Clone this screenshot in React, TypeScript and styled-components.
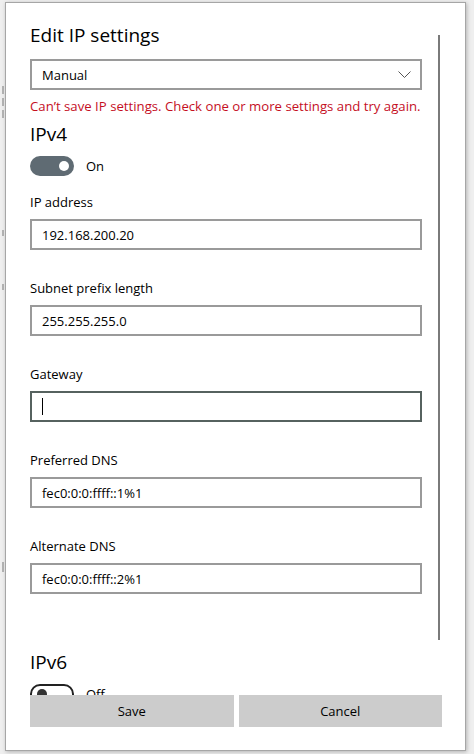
import React from 'react';
import styled, { createGlobalStyle } from 'styled-components';

const GlobalStyle = createGlobalStyle`
  html, body {
    margin: 0;
    padding: 0;
  }
  body {
    font-family: 'Open Sans', 'Noto Sans', sans-serif;
    color: #000;
    background: #efefef;
  }
`;

const Page = styled.div`
  display: flex;
  width: 474px;
  height: 754px;
  overflow: hidden;
  background: #efefef;
`;

const Backdrop = styled.div`
  width: 5px;
  flex: none;
  display: flex;
  flex-direction: column;
  align-items: flex-end;
  padding-top: 86px;
`;

const BackdropMark = styled.div<{ $gap?: number; $h?: number }>`
  width: 2px;
  height: ${(p) => p.$h ?? 8}px;
  margin-top: ${(p) => p.$gap ?? 4}px;
  margin-right: 1px;
  background: #b4b4b4;
`;

const Dialog = styled.div`
  box-sizing: border-box;
  width: 461px;
  margin: 2px 0 3px 0;
  border: 1px solid #a6a6a6;
  box-shadow: 1px 1px 4px rgba(0, 0, 0, 0.25);
  background: #fff;
  display: flex;
  flex-direction: column;
`;

const Body = styled.div`
  flex: 1;
  min-height: 0;
  display: flex;
  overflow: hidden;
`;

const Content = styled.div`
  flex: none;
  width: 392px;
  padding: 18px 0 0 24px;
`;

const ScrollTrack = styled.div`
  margin-left: 16px;
  padding-top: 32px;
`;

const ScrollThumb = styled.div`
  width: 2px;
  height: 605px;
  background: #7a7a7a;
`;

const Title = styled.div`
  font-size: 19px;
  line-height: 28px;
`;

const Heading = styled.div<{ $gap: number }>`
  font-size: 19px;
  line-height: 28px;
  margin-top: ${(p) => p.$gap}px;
`;

const Select = styled.div`
  box-sizing: border-box;
  height: 31px;
  margin-top: 10px;
  border: 2px solid #9a9a9a;
  display: flex;
  align-items: center;
  justify-content: space-between;
  padding: 0 9px 0 10px;
  font-size: 13px;
`;

const ErrorText = styled.div`
  margin-top: 6px;
  font-size: 13.2px;
  line-height: 20px;
  color: #c50f1f;
  white-space: nowrap;
`;

const ToggleRow = styled.div`
  display: flex;
  align-items: center;
  gap: 12px;
  margin-top: 8px;
  font-size: 13px;
  line-height: 20px;
`;

const Toggle = styled.div<{ $on: boolean }>`
  box-sizing: border-box;
  width: 44px;
  height: 20px;
  border-radius: 10px;
  display: flex;
  align-items: center;
  justify-content: ${(p) => (p.$on ? 'flex-end' : 'flex-start')};
  padding: 0 5px;
  background: ${(p) => (p.$on ? '#5f6b73' : '#fff')};
  border: ${(p) => (p.$on ? 'none' : '2px solid #222')};
`;

const Knob = styled.div<{ $on: boolean }>`
  width: 10px;
  height: 10px;
  border-radius: 50%;
  background: ${(p) => (p.$on ? '#fff' : '#333')};
`;

const Label = styled.div<{ $gap: number }>`
  margin-top: ${(p) => p.$gap}px;
  font-size: 13px;
  line-height: 20px;
`;

const Input = styled.div<{ $focused?: boolean }>`
  box-sizing: border-box;
  height: 31px;
  margin-top: 7px;
  border: 2px solid ${(p) => (p.$focused ? '#56625f' : '#9a9a9a')};
  display: flex;
  align-items: center;
  padding: 0 10px;
  font-size: 13px;
`;

const Caret = styled.span`
  width: 1px;
  height: 17px;
  background: #000;
`;

const Footer = styled.div`
  flex: none;
  height: 55px;
  display: flex;
  align-items: flex-start;
  gap: 5px;
  padding: 0 23px 0 24px;
`;

const Button = styled.button`
  flex: 1;
  height: 32px;
  border: none;
  background: #cccccc;
  font-family: inherit;
  font-size: 13px;
  color: #000;
  padding: 0;
`;

const Chevron = () => (
  <svg width="13" height="8" viewBox="0 0 13 8">
    <polyline points="0.5,0.5 6.5,6.5 12.5,0.5" fill="none" stroke="#555" strokeWidth="1" />
  </svg>
);

const fields = [
  { label: 'IP address', value: '192.168.200.20' },
  { label: 'Subnet prefix length', value: '255.255.255.0' },
  { label: 'Gateway', value: '', focused: true },
  { label: 'Preferred DNS', value: 'fec0:0:0:ffff::1%1' },
  { label: 'Alternate DNS', value: 'fec0:0:0:ffff::2%1' },
];

const App = () => {
  return (
    <>
      <GlobalStyle />
      <Page>
        <Backdrop>
          <BackdropMark $gap={0} />
          <BackdropMark />
          <BackdropMark />
          <BackdropMark $gap={112} $h={6} />
          <BackdropMark $gap={48} $h={6} />
          <BackdropMark $gap={272} $h={10} />
        </Backdrop>
        <Dialog>
          <Body>
            <Content>
              <Title>Edit IP settings</Title>
              <Select>
                <span>Manual</span>
                <Chevron />
              </Select>
              <ErrorText>Can’t save IP settings. Check one or more settings and try again.</ErrorText>
              <Heading $gap={4}>IPv4</Heading>
              <ToggleRow>
                <Toggle $on>
                  <Knob $on />
                </Toggle>
                <span>On</span>
              </ToggleRow>
              {fields.map((f, i) => (
                <React.Fragment key={f.label}>
                  <Label $gap={i === 0 ? 16 : 28}>{f.label}</Label>
                  <Input $focused={f.focused}>{f.focused ? <Caret /> : f.value}</Input>
                </React.Fragment>
              ))}
              <Heading $gap={54}>IPv6</Heading>
              <ToggleRow>
                <Toggle $on={false}>
                  <Knob $on={false} />
                </Toggle>
                <span>Off</span>
              </ToggleRow>
            </Content>
            <ScrollTrack>
              <ScrollThumb />
            </ScrollTrack>
          </Body>
          <Footer>
            <Button>Save</Button>
            <Button>Cancel</Button>
          </Footer>
        </Dialog>
      </Page>
    </>
  );
};

export default App;
